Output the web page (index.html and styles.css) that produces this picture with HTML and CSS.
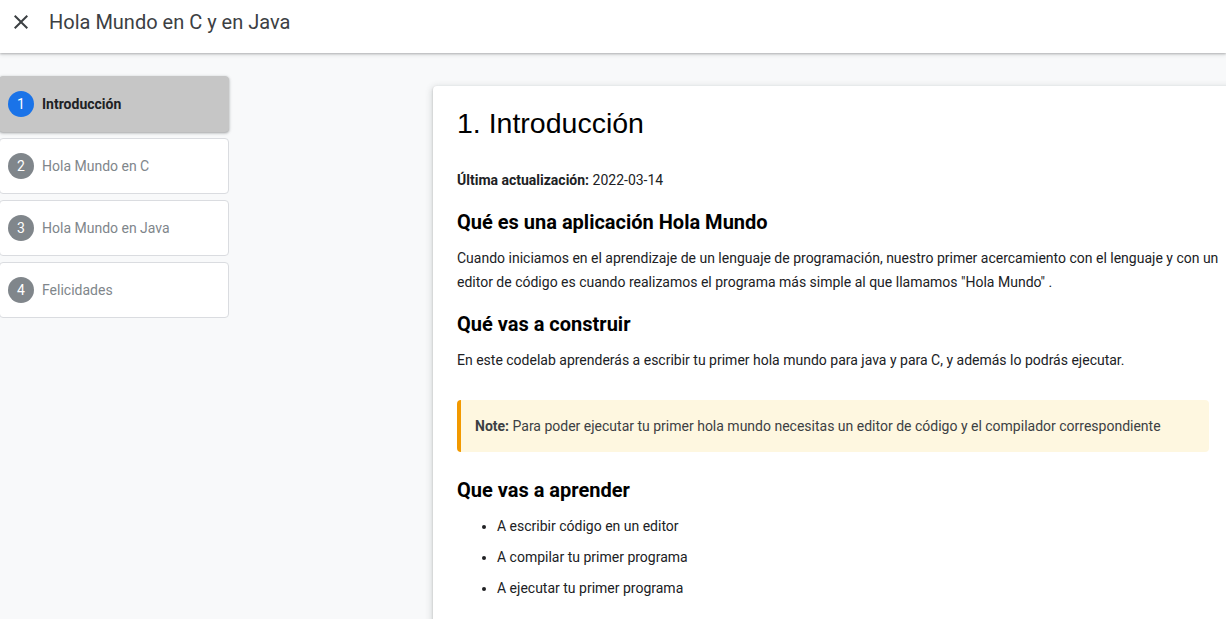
FILE: index.html
```html
<!DOCTYPE html>
<html lang="es">
<head>
<meta charset="utf-8">
<title>Hola Mundo en C y en Java</title>
<link rel="stylesheet" href="styles.css">
</head>
<body>
<header class="topbar">
  <button class="close" aria-label="Cerrar">
    <svg viewBox="0 0 24 24" width="24" height="24"><path d="M19 6.41L17.59 5 12 10.59 6.41 5 5 6.41 10.59 12 5 17.59 6.41 19 12 13.41 17.59 19 19 17.59 13.41 12z" fill="currentColor"/></svg>
  </button>
  <h1 class="title">Hola Mundo en C y en Java</h1>
</header>
<div class="layout">
  <nav class="steps">
    <div class="step active"><span class="num">1</span><span class="label">Introducción</span></div>
    <div class="step"><span class="num">2</span><span class="label">Hola Mundo en C</span></div>
    <div class="step"><span class="num">3</span><span class="label">Hola Mundo en Java</span></div>
    <div class="step"><span class="num">4</span><span class="label">Felicidades</span></div>
  </nav>
  <main class="card">
    <h2 class="step-title">1. Introducción</h2>
    <p><strong>Última actualización:</strong> 2022-03-14</p>
    <h3>Qué es una aplicación Hola Mundo</h3>
    <p>Cuando iniciamos en el aprendizaje de un lenguaje de programación, nuestro primer acercamiento con el lenguaje y con un editor de código es cuando realizamos el programa más simple al que llamamos "Hola Mundo" .</p>
    <h3>Qué vas a construir</h3>
    <p>En este codelab aprenderás a escribir tu primer hola mundo para java y para C, y además lo podrás ejecutar.</p>
    <aside class="note"><strong>Note:</strong> Para poder ejecutar tu primer hola mundo necesitas un editor de código y el compilador correspondiente</aside>
    <h3>Que vas a aprender</h3>
    <ul>
      <li>A escribir código en un editor</li>
      <li>A compilar tu primer programa</li>
      <li>A ejecutar tu primer programa</li>
    </ul>
  </main>
</div>
</body>
</html>
```
FILE: styles.css
```css
html, body {
  margin: 0;
  height: 100%;
  overflow: hidden;
}
body {
  background: #f8f9fa;
  font-family: Roboto, "Noto Sans", Arial, sans-serif;
  color: #202124;
}
.topbar {
  height: 53px;
  box-sizing: border-box;
  padding-top: 8px;
  background: #fff;
  display: flex;
  align-items: flex-start;
  box-shadow: 0 1px 2px rgba(60,64,67,0.3), 0 2px 4px rgba(60,64,67,0.12);
  position: relative;
  z-index: 2;
}
.close {
  border: 0;
  background: none;
  padding: 0;
  margin: 2px 0 0 9px;
  width: 24px;
  height: 24px;
  color: #3c4043;
  display: flex;
}
.title {
  margin: 0 0 0 16px;
  font-size: 20px;
  font-weight: 400;
  color: #3c4043;
  line-height: 28px;
}
.layout {
  display: flex;
  align-items: flex-start;
  gap: 204px;
}
.steps {
  width: 230px;
  margin-left: -1px;
  padding-top: 23px;
  display: flex;
  flex-direction: column;
  gap: 6px;
  flex-shrink: 0;
}
.step {
  height: 56px;
  box-sizing: border-box;
  background: #fff;
  border: 1px solid #dadce0;
  border-radius: 4px;
  display: flex;
  align-items: center;
  padding-left: 8px;
  gap: 8px;
  font-size: 14px;
  color: #80868b;
}
.step.active {
  background: #c6c6c6;
  border-color: #c6c6c6;
  color: #202124;
  font-weight: 700;
  box-shadow: 0 1px 2px rgba(60,64,67,0.3), 0 1px 3px 1px rgba(60,64,67,0.15);
}
.num {
  width: 26px;
  height: 26px;
  border-radius: 50%;
  background: #80868b;
  color: #fff;
  font-weight: 400;
  display: flex;
  align-items: center;
  justify-content: center;
  font-size: 14px;
}
.active .num {
  background: #1a73e8;
}
.card {
  width: 800px;
  flex-shrink: 0;
  box-sizing: border-box;
  margin-top: 33px;
  min-height: 700px;
  background: #fff;
  border-radius: 4px;
  padding: 17px 24px 16px;
  box-shadow: 0 1px 2px rgba(60,64,67,0.3), 0 2px 6px 2px rgba(60,64,67,0.15);
}
.step-title {
  font-family: "Liberation Sans", Arial, sans-serif;
  font-size: 28.5px;
  font-weight: 400;
  line-height: 40px;
  margin: 0 0 25px;
  color: #000;
}
.card p {
  margin: 0 -12px 0 0;
  font-size: 14px;
  line-height: 24px;
}
.card p strong {
  font-weight: 700;
}
.card h3 {
  font-size: 20px;
  line-height: 28px;
  font-weight: 700;
  margin: 16px 0 10px;
  color: #000;
}
.note {
  margin: 28px 0 24px;
  background: #fef7e0;
  border-left: 4px solid #f29900;
  border-radius: 4px;
  padding: 14px 14px;
  font-size: 14px;
  line-height: 24px;
  color: #3c4043;
}
.note + h3 {
  margin-top: 24px;
}
.card ul {
  margin: 10px 0 0;
  padding-left: 40px;
}
.card li {
  font-size: 14px;
  line-height: 24px;
  margin-bottom: 7px;
}
```
